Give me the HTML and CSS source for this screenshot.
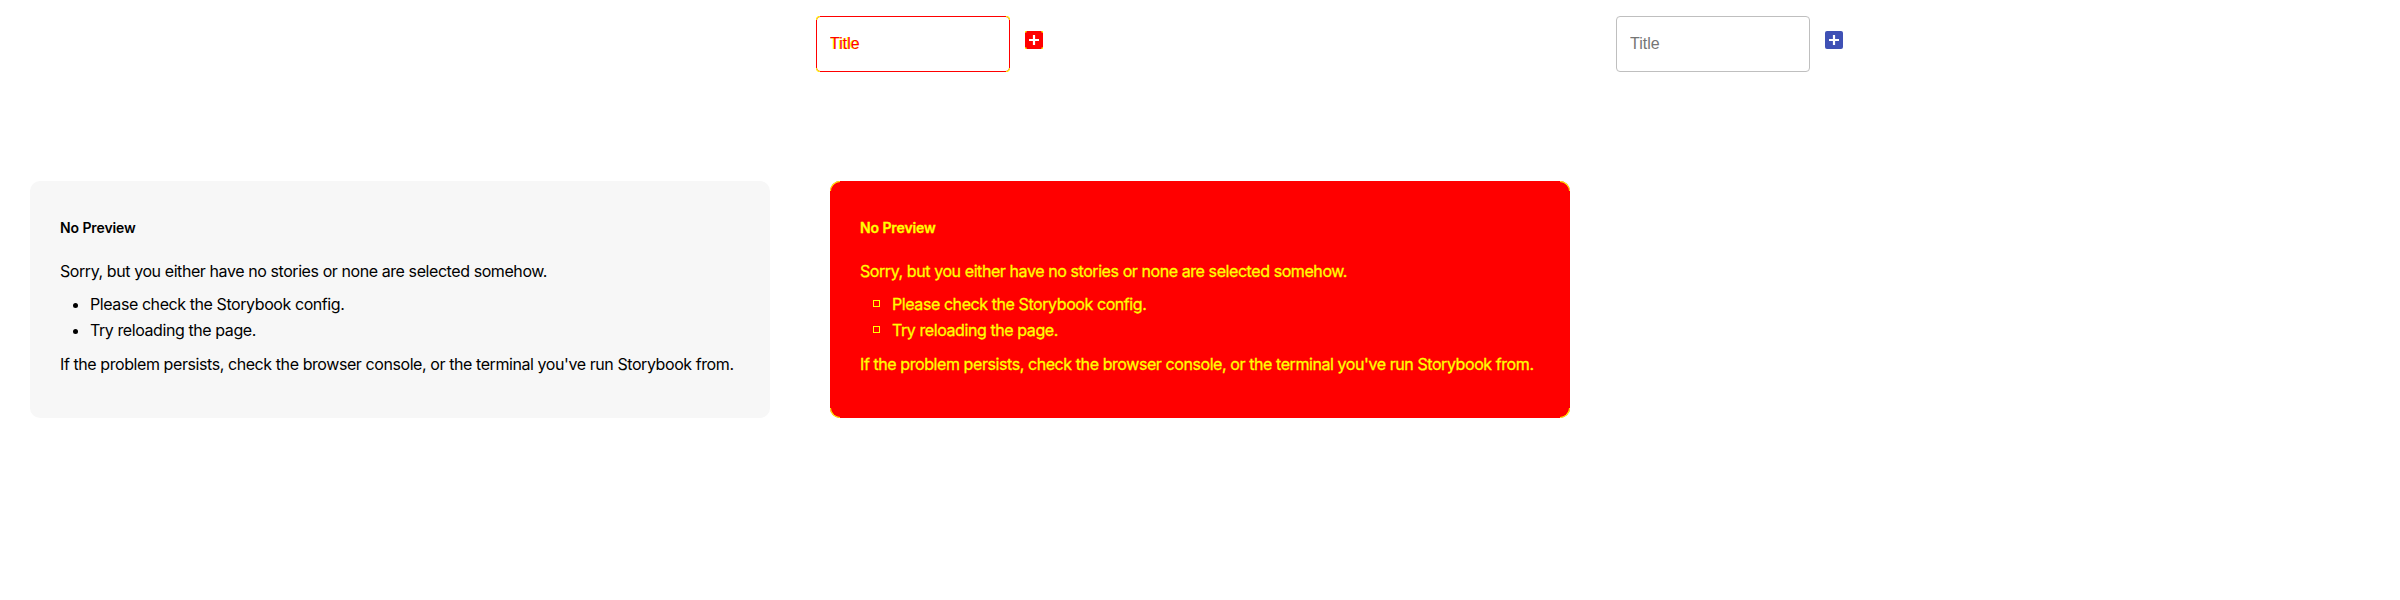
FILE: index.html
```html
<!DOCTYPE html>
<html lang="en">
<head>
<meta charset="utf-8">
<title>Story visual diff</title>
<link rel="stylesheet" href="styles.css">
</head>
<body>
<main class="sheet">
  <section class="frame frame--expected">
    <div class="toolbar is-absent">
      <div class="field"><input class="title-input" placeholder="Title"></div>
      <button class="add-btn" type="button" aria-label="Add">
        <svg width="18" height="18" viewBox="0 0 18 18"><rect width="18" height="18" rx="2" fill="#3f51b5"/><path d="M9 4v10M4 9h10" stroke="#fff" stroke-width="2.2"/></svg>
      </button>
    </div>
    <div class="nopreview">
      <h1 class="nopreview__heading">No Preview</h1>
      <p class="nopreview__text">Sorry, but you either have no stories or none are selected somehow.</p>
      <ul class="nopreview__list">
        <li>Please check the Storybook config.</li>
        <li>Try reloading the page.</li>
      </ul>
      <p class="nopreview__text nopreview__text--last">If the problem persists, check the browser console, or the terminal you've run Storybook from.</p>
    </div>
  </section>

  <section class="frame frame--diff">
    <div class="toolbar">
      <div class="field field--diff">
        <input class="title-input" placeholder="Title">
        <span class="corner corner--tl"></span><span class="corner corner--tr"></span><span class="corner corner--bl"></span><span class="corner corner--br"></span>
      </div>
      <button class="add-btn" type="button" aria-label="Add">
        <svg width="18" height="18" viewBox="0 0 18 18"><rect width="18" height="18" rx="2" fill="#ff0000"/><path d="M9 4v10M4 9h10" stroke="#fff" stroke-width="2.2"/><rect x="0" y="0" width="1.5" height="1.5" fill="#ff0"/><rect x="16.5" y="0" width="1.5" height="1.5" fill="#ff0"/><rect x="0" y="16.5" width="1.5" height="1.5" fill="#ff0"/><rect x="16.5" y="16.5" width="1.5" height="1.5" fill="#ff0"/></svg>
      </button>
    </div>
    <div class="nopreview nopreview--diff">
      <h1 class="nopreview__heading">No Preview</h1>
      <p class="nopreview__text">Sorry, but you either have no stories or none are selected somehow.</p>
      <ul class="nopreview__list">
        <li>Please check the Storybook config.</li>
        <li>Try reloading the page.</li>
      </ul>
      <p class="nopreview__text nopreview__text--last">If the problem persists, check the browser console, or the terminal you've run Storybook from.</p>
      <span class="corner corner--tl"></span><span class="corner corner--tr"></span><span class="corner corner--bl"></span><span class="corner corner--br"></span>
    </div>
  </section>

  <section class="frame frame--actual">
    <div class="toolbar">
      <div class="field"><input class="title-input" placeholder="Title"></div>
      <button class="add-btn" type="button" aria-label="Add">
        <svg width="18" height="18" viewBox="0 0 18 18"><rect width="18" height="18" rx="2" fill="#3f51b5"/><path d="M9 4v10M4 9h10" stroke="#fff" stroke-width="2.2"/></svg>
      </button>
    </div>
    <div class="nopreview is-absent">
      <h1 class="nopreview__heading">No Preview</h1>
      <p class="nopreview__text">Sorry, but you either have no stories or none are selected somehow.</p>
      <ul class="nopreview__list">
        <li>Please check the Storybook config.</li>
        <li>Try reloading the page.</li>
      </ul>
      <p class="nopreview__text nopreview__text--last">If the problem persists, check the browser console, or the terminal you've run Storybook from.</p>
    </div>
  </section>
</main>
</body>
</html>
```

FILE: styles.css
```css
* { box-sizing: border-box; }

html, body {
  margin: 0;
  background: #ffffff;
}

body {
  font-family: Inter, "Noto Sans", sans-serif;
  color: #000000;
}

.sheet {
  display: grid;
  grid-template-columns: repeat(3, 800px);
  align-items: start;
}

.frame {
  padding-top: 16px;
}

.is-absent {
  visibility: hidden;
}

/* top row: title input + add button */
.toolbar {
  display: flex;
  align-items: flex-start;
  gap: 15px;
  height: 56px;
  margin-left: 16px;
}

.field {
  position: relative;
  width: 194px;
  height: 56px;
}

.title-input {
  display: block;
  width: 100%;
  height: 100%;
  margin: 0;
  padding: 0 13px;
  border: 1px solid #bfbfbf;
  border-radius: 4px;
  background: #ffffff;
  font-family: "Liberation Sans", Arial, sans-serif;
  font-size: 16px;
  outline: none;
}

.title-input::placeholder {
  color: #757575;
  opacity: 1;
}

.add-btn {
  display: block;
  width: 18px;
  height: 18px;
  margin-top: 15px;
  padding: 0;
  border: 0;
  background: none;
}

.add-btn svg {
  display: block;
}

/* No Preview panel */
.nopreview {
  position: relative;
  width: 740px;
  height: 237px;
  margin: 109px 0 0 30px;
  padding: 30px;
  border-radius: 10px;
  background: #f7f7f7;
}

.nopreview__heading {
  margin: 7px 0 23px;
  font-size: 14px;
  font-weight: 600;
  line-height: 20px;
  letter-spacing: -0.1px;
}

.nopreview__text {
  margin: 0;
  font-size: 16px;
  line-height: 20px;
  letter-spacing: -0.42px;
  white-space: nowrap;
}

.nopreview__text--last {
  margin-top: 14px;
}

.nopreview__list {
  margin: 13px 0 0;
  padding-left: 30px;
  font-size: 16px;
  line-height: 20px;
  letter-spacing: -0.42px;
}

.nopreview__list li + li {
  margin-top: 6px;
}

/* diff rendering */
.field--diff .title-input {
  border-color: #ff0000;
}

.field--diff .title-input::placeholder {
  color: #ff0000;
  text-shadow: -1px 0 0 #ffff00;
}

.nopreview--diff {
  background: #ff0000;
  color: #ffff00;
  -webkit-text-stroke: 0.3px #ffff00;
}

.nopreview--diff .nopreview__list {
  list-style: none;
}

.nopreview--diff .nopreview__list li::before {
  content: "";
  display: inline-block;
  width: 5px;
  height: 5px;
  margin-left: -17px;
  margin-right: 12px;
  vertical-align: 3px;
  border: 1px solid #ffff00;
}

.corner {
  position: absolute;
  width: 10px;
  height: 10px;
  border: 0 solid #ffff00;
}

.field .corner {
  width: 4px;
  height: 4px;
}

.corner--tl { top: 0; left: 0; border-top-width: 1px; border-left-width: 1px; border-top-left-radius: 10px; }
.corner--tr { top: 0; right: 0; border-top-width: 1px; border-right-width: 1px; border-top-right-radius: 10px; }
.corner--bl { bottom: 0; left: 0; border-bottom-width: 1px; border-left-width: 1px; border-bottom-left-radius: 10px; }
.corner--br { bottom: 0; right: 0; border-bottom-width: 1px; border-right-width: 1px; border-bottom-right-radius: 10px; }

.field .corner--tl { border-top-left-radius: 4px; }
.field .corner--tr { border-top-right-radius: 4px; }
.field .corner--bl { border-bottom-left-radius: 4px; }
.field .corner--br { border-bottom-right-radius: 4px; }
```
